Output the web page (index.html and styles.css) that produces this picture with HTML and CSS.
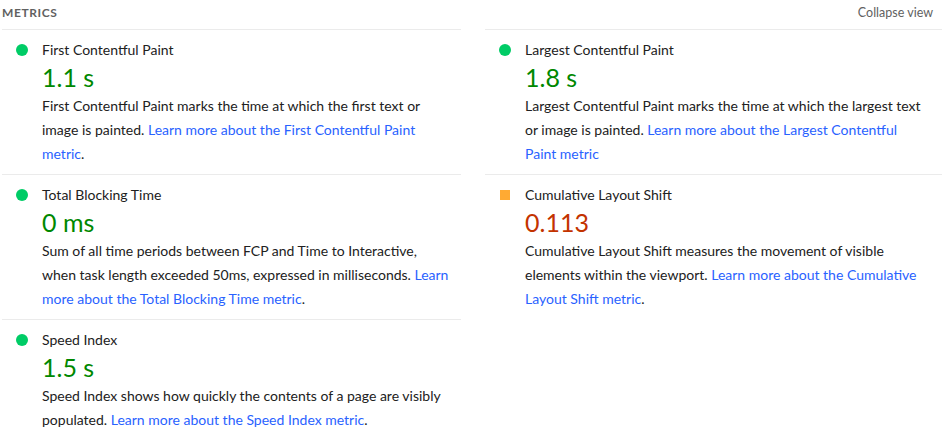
FILE: index.html
```html
<!DOCTYPE html>
<html lang="en">
<head>
  <meta charset="UTF-8">
  <title>Metrics</title>
  <link rel="stylesheet" href="styles.css">
</head>
<body>
  <div class="metrics">
    <div class="metrics-header">
      <span class="metrics-title">Metrics</span>
      <a class="toggle" href="#">Collapse view</a>
    </div>

    <div class="metrics-grid">
      <!-- First Contentful Paint -->
      <div class="metric">
        <span class="icon pass"></span>
        <div class="body">
          <div class="name">First Contentful Paint</div>
          <div class="value pass">1.1&nbsp;s</div>
          <div class="desc">First Contentful Paint marks the time at which the first text or image is painted. <a href="#">Learn more about the First Contentful Paint metric</a>.</div>
        </div>
      </div>

      <!-- Largest Contentful Paint -->
      <div class="metric">
        <span class="icon pass"></span>
        <div class="body">
          <div class="name">Largest Contentful Paint</div>
          <div class="value pass">1.8&nbsp;s</div>
          <div class="desc">Largest Contentful Paint marks the time at which the largest text or image is painted. <a href="#">Learn more about the Largest Contentful Paint metric</a></div>
        </div>
      </div>

      <!-- Total Blocking Time -->
      <div class="metric">
        <span class="icon pass"></span>
        <div class="body">
          <div class="name">Total Blocking Time</div>
          <div class="value pass">0&nbsp;ms</div>
          <div class="desc">Sum of all time periods between FCP and Time to Interactive, when task length exceeded 50ms, expressed in milliseconds. <a href="#">Learn more about the Total Blocking Time metric</a>.</div>
        </div>
      </div>

      <!-- Cumulative Layout Shift -->
      <div class="metric">
        <span class="icon average"></span>
        <div class="body">
          <div class="name">Cumulative Layout Shift</div>
          <div class="value average">0.113</div>
          <div class="desc">Cumulative Layout Shift measures the movement of visible elements within the viewport. <a href="#">Learn more about the Cumulative Layout Shift metric</a>.</div>
        </div>
      </div>

      <!-- Speed Index -->
      <div class="metric">
        <span class="icon pass"></span>
        <div class="body">
          <div class="name">Speed Index</div>
          <div class="value pass">1.5&nbsp;s</div>
          <div class="desc">Speed Index shows how quickly the contents of a page are visibly populated. <a href="#">Learn more about the Speed Index metric</a>.</div>
        </div>
      </div>
    </div>
  </div>
</body>
</html>
```

FILE: styles.css
```css
body {
  margin: 0;
  background-color: #fff;
  font-family: Lato, "Noto Sans", sans-serif;
  color: #212121;
}

.metrics {
  padding-left: 2px;
}

/* header row */
.metrics-header {
  display: flex;
  justify-content: space-between;
  align-items: center;
  height: 24px;
  margin-bottom: 5px;
}

.metrics-title {
  font-size: 12px;
  font-weight: 700;
  letter-spacing: 0.6px;
  text-transform: uppercase;
  color: #616161;
}

.toggle {
  font-size: 12.5px;
  color: #616161;
  text-decoration: none;
  margin-right: 9px;
}

/* two-column metric grid */
.metrics-grid {
  display: grid;
  grid-template-columns: 459px 1fr;
  column-gap: 24px;
}

.metric {
  display: flex;
  border-top: 1px solid #ebebeb;
  padding: 10px 0 8px;
}

.icon {
  flex: none;
  width: 12px;
  height: 12px;
  margin: 4px 14px 0;
  border-radius: 50%;
}

.icon.pass {
  background-color: #0c6;
}

.icon.average {
  width: 10px;
  height: 10px;
  margin: 5px 15px 0;
  border-radius: 0;
  background-color: #fa3;
}

.body {
  flex: 1;
  min-width: 0;
}

.name {
  font-size: 14px;
  line-height: 20px;
}

.value {
  font-size: 25px;
  line-height: 34px;
}

.value.pass {
  color: #080;
}

.value.average {
  color: #c33300;
}

.desc {
  font-size: 14px;
  line-height: 24px;
  padding-right: 12px;
  color: #212121;
}

.desc a {
  color: #2962ff;
  text-decoration: none;
}
```
